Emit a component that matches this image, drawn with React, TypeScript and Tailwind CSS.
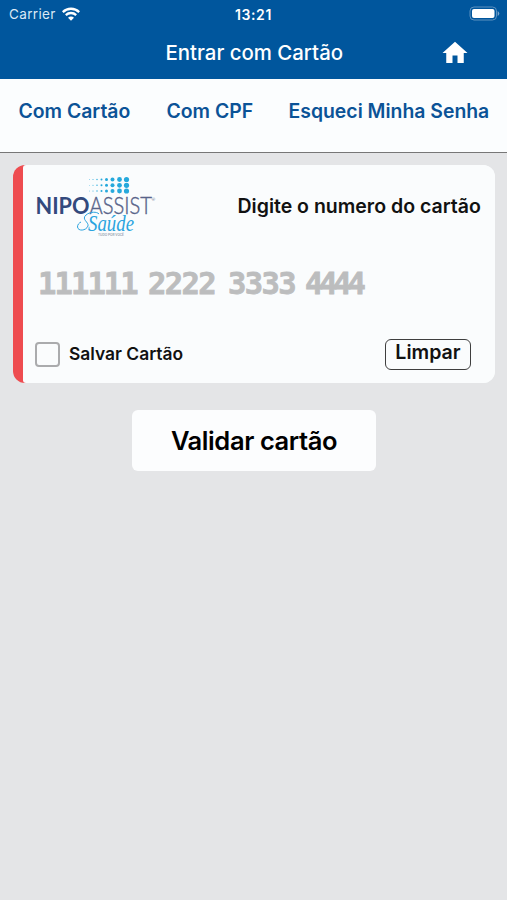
import React from 'react';

const tabs = [
  { label: 'Com Cartão', className: 'ml-[18.5px] w-[113px]' },
  { label: 'Com CPF', className: 'ml-[35px] w-[87px]' },
  { label: 'Esqueci Minha Senha', className: 'ml-[35px] w-[203px]' },
];

const cardGroups = [
  { digits: '111111', className: 'w-[110px] tracking-[-1.9px]' },
  { digits: '2222', className: 'w-[80px] tracking-[-1.6px]' },
  { digits: '3333', className: 'w-[77px] tracking-[-1.6px]' },
  { digits: '4444', className: 'w-[62px] tracking-[-4.2px]' },
];

const dotColumns = [
  { x: 89.5, r: 0.4 },
  { x: 93, r: 0.5 },
  { x: 97, r: 0.7 },
  { x: 101.5, r: 1 },
  { x: 106.5, r: 1.5 },
  { x: 112.5, r: 2 },
  { x: 119.5, r: 2.4 },
  { x: 126.5, r: 2.6 },
];

const Logo: React.FC = () => (
  <svg width="122" height="66" viewBox="36 173 122 66">
    {dotColumns.map(col =>
      [179.5, 185.3, 191].map(y => <circle key={`${col.x}-${y}`} cx={col.x} cy={y} r={col.r} fill="#26a9dc" />)
    )}
    <g fontFamily="Lato, sans-serif">
      <text x="35.5" y="213.5" fontSize="22.5" fontWeight="700" textLength="54" lengthAdjust="spacingAndGlyphs" fill="#334a7d">NIPO</text>
      <text x="89.5" y="213.5" fontSize="22.5" fontWeight="300" textLength="62.5" lengthAdjust="spacingAndGlyphs" fill="#58648a" stroke="#58648a" strokeWidth="0.4">ASSIST</text>
      <text x="151.5" y="201" fontSize="4.5" fill="#58648a">®</text>
    </g>
    <path d="M99 214C97 211.5 90 211.5 86 215C81 219.5 89 222 88 226C86 231 78 231.5 77.5 227C77.5 224.5 79 223 81 222" fill="none" stroke="#2ba4df" strokeWidth="1" />
    <text x="88" y="230.5" fontSize="23" fontFamily="'Liberation Serif', serif" fontStyle="italic" fill="#2ba4df" textLength="46" lengthAdjust="spacingAndGlyphs">Saúde</text>
    <text x="98" y="236" fontSize="3.5" fontFamily="Inter, sans-serif" fill="#64748b" textLength="26" lengthAdjust="spacingAndGlyphs">TUDO POR VOCÊ</text>
  </svg>
);

const WifiIcon: React.FC = () => (
  <svg width="18" height="14" viewBox="0 0 18 14" fill="none" stroke="white" strokeWidth="2.3">
    <path d="M0.8 5.1C5.4 0.6 12.6 0.6 17.2 5.1" />
    <path d="M3.8 8.1C6.8 5.3 11.2 5.3 14.2 8.1" />
    <path d="M9 13.7L6 10.7C7.8 9.2 10.2 9.2 12 10.7Z" fill="white" stroke="none" />
  </svg>
);

const BatteryIcon: React.FC = () => (
  <svg width="31" height="15" viewBox="0 0 31 15">
    <rect x="1" y="1" width="26.5" height="13" rx="4" fill="none" stroke="#5d91bf" strokeWidth="1" />
    <rect x="3" y="3" width="22.5" height="9" rx="2" fill="white" />
    <path d="M28.7 5V10Q30.3 9 30.3 7.5T28.7 5" fill="#7ca6cc" />
  </svg>
);

const App: React.FC = () => {
  return (
    <div className="h-[900px] w-[507px] overflow-hidden bg-[#e4e5e7] font-['Inter',sans-serif] whitespace-nowrap">
      <header className="h-[79px] bg-[#00569d] text-white">
        <div className="flex h-[27px] items-center">
          <span className="ml-[9px] w-[53px] pt-px text-[13.5px] tracking-[0.35px] text-[#dbe9f5]">Carrier</span>
          <WifiIcon />
          <span className="ml-[155px] w-[234px] pt-px text-[14px] font-semibold tracking-[0.6px]">13:21</span>
          <BatteryIcon />
        </div>
        <div className="flex h-[52px] items-center">
          <h1 className="ml-[165.5px] w-[274.5px] text-[20.4px] font-medium">Entrar com Cartão</h1>
          <svg width="30" height="30" viewBox="0 0 24 24" fill="currentColor">
            <path d="M10 20v-6h4v6h5v-8h3L12 3 2 12h3v8z" />
          </svg>
        </div>
      </header>

      <nav className="flex h-[74px] border-b border-[#777] bg-[#fbfdfe] pt-[17px] text-[19.4px] leading-[31px] font-semibold text-[#0b5397]">
        {tabs.map(tab => (
          <a key={tab.label} className={tab.className}>{tab.label}</a>
        ))}
      </nav>

      <main className="px-[13px] pt-[12px]">
        <section className="h-[218px] w-[482px] rounded-[12px] bg-linear-to-r from-[#ee4c50] from-[20px] to-[#fafcfd] to-[20px]">
          <div className="ml-[10px] h-full rounded-l-[3px] rounded-r-[12px] bg-[#fafcfd] text-[#111]">
            <div className="flex h-[82px] pt-[8px] pl-[13px]">
              <Logo />
              <h2 className="mt-[18px] ml-[79.5px] text-[19.5px] leading-[31px] font-semibold">Digite o numero do cartão</h2>
            </div>
            <div className="flex h-[74px] items-center pb-px pl-[15px] font-['DejaVu_Sans_Mono',monospace] text-[30.5px] font-bold text-[#bcbdbe] [-webkit-text-stroke:0.8px_#bcbdbe]">
              {cardGroups.map(group => (
                <span key={group.digits} className={group.className}>{group.digits}</span>
              ))}
            </div>
            <div className="flex h-[62px] pt-[18px] pl-[12px]">
              <label className="flex h-[30px] w-[350px] items-center gap-[10px] text-[17.4px] font-semibold">
                <span className="size-[25px] rounded-[4px] border-2 border-[#aaabad]" />
                <span className="-ml-px">Salvar Cartão</span>
              </label>
              <button className="h-[31px] w-[86px] rounded-[6px] border-[1.5px] border-[#3e3e3e] pb-[5px] text-[19.6px] leading-[25px] font-semibold">Limpar</button>
            </div>
          </div>
        </section>

        <button className="mt-[27px] ml-[119px] h-[61px] w-[244px] rounded-[6px] bg-[#fcfdfe] pt-[2px] text-[25.5px] font-semibold tracking-[-0.4px] text-black">
          Validar cartão
        </button>
      </main>
    </div>
  );
};

export default App;
